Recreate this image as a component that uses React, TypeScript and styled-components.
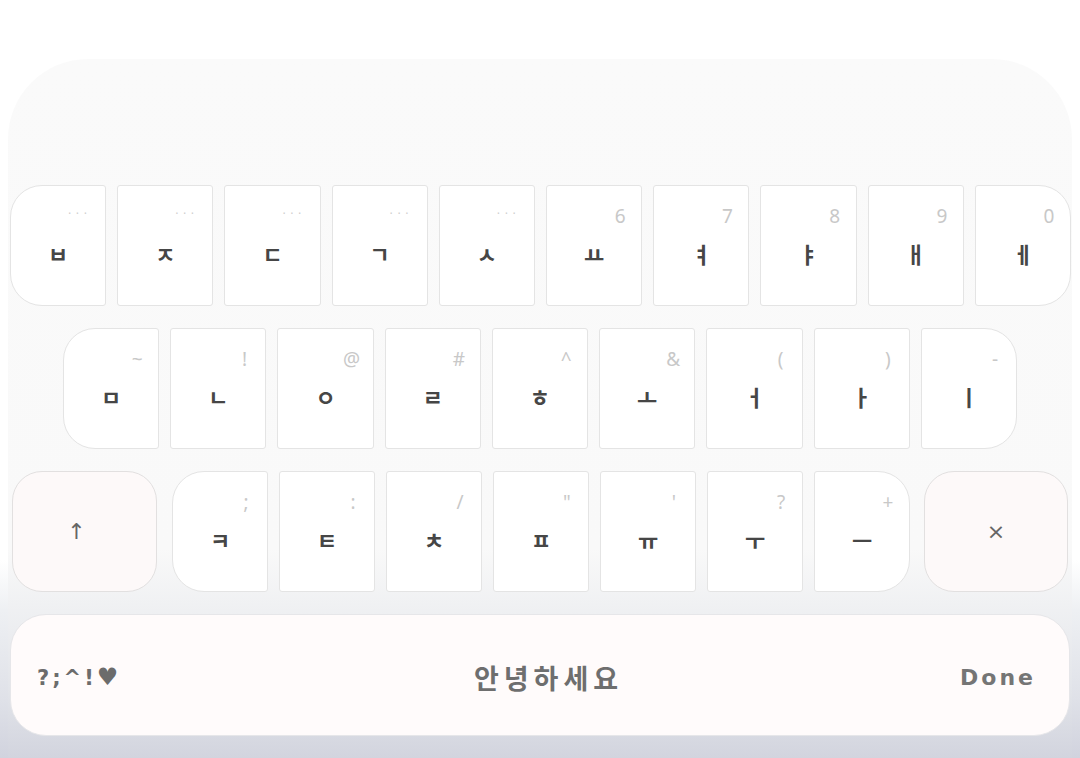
import React from "react";
import styled, { createGlobalStyle } from "styled-components";

const Global = createGlobalStyle`
  html, body { margin: 0; padding: 0; }
  body {
    width: 1080px;
    height: 758px;
    overflow: hidden;
    background: linear-gradient(to bottom, #ffffff 0, #ffffff 560px, #eef0f3 610px, #dfe1e8 700px, #d1d3de 758px);
    font-family: "Noto Sans", "Noto Sans CJK KR", sans-serif;
  }
`;

const Panel = styled.div`
  margin: 59px 8px 0;
  height: 699px;
  box-sizing: border-box;
  padding-top: 126px;
  border-radius: 80px 80px 0 0;
  background: linear-gradient(to bottom, #fafafa 0, #f9f9f9 490px, #f0f1f3 545px, #e3e5ea 630px, #d2d4de 699px);
  display: flex;
  flex-direction: column;
  gap: 22px;
`;

const Row = styled.div<{ $left: number; $right: number }>`
  display: flex;
  gap: 11px;
  margin: 0 ${(p) => p.$right}px 0 ${(p) => p.$left}px;
`;

const KeyGroup = styled.div`
  display: flex;
  gap: 11px;
  flex: 1 1 0;
  margin: 0 3px 0 4px;
`;

type Shape = "left" | "right" | "both" | "none";

const radius = (s: Shape) => {
  switch (s) {
    case "left":
      return "32px 3px 3px 32px";
    case "right":
      return "3px 32px 32px 3px";
    case "both":
      return "30px";
    default:
      return "3px";
  }
};

const Key = styled.div<{ $shape: Shape; $action?: boolean; $w?: number }>`
  position: relative;
  flex: ${(p) => (p.$w ? `0 0 ${p.$w}px` : "1 1 0")};
  height: 121px;
  box-sizing: border-box;
  background: ${(p) => (p.$action ? "#fdf9f9" : "#ffffff")};
  border: 1px solid ${(p) => (p.$action ? "#e2e0e0" : "#e4e4e4")};
  border-radius: ${(p) => radius(p.$shape)};
  display: flex;
  align-items: center;
  justify-content: center;
`;

const Main = styled.span`
  padding-top: 14px;
  font-family: "Noto Sans CJK KR", "Noto Sans", sans-serif;
  font-size: 22px;
  font-weight: 700;
  color: #464646;
  line-height: 1;
`;

const Symbol = styled.span<{ $size: number; $shift?: number }>`
  margin-right: ${(p) => p.$shift ?? 0}px;
  font-family: "DejaVu Sans", sans-serif;
  font-size: ${(p) => p.$size}px;
  color: #666;
  line-height: 1;
`;

const Hint = styled.span`
  position: absolute;
  top: 21px;
  right: 11px;
  width: 20px;
  text-align: center;
  font-family: "Noto Sans", sans-serif;
  font-size: 19px;
  line-height: 1;
  color: #c8c8c8;
`;

const Dots = styled.span`
  position: absolute;
  top: 22px;
  right: 14px;
  font-family: "DejaVu Sans", sans-serif;
  font-size: 12px;
  letter-spacing: 4px;
  line-height: 1;
  color: #cfcfcf;
`;

const Bar = styled.div`
  margin: 0 2px;
  height: 122px;
  box-sizing: border-box;
  border-radius: 36px;
  background: #fffbfb;
  border: 1px solid #e6e6e9;
  display: grid;
  grid-template-columns: 1fr auto 1fr;
  align-items: center;
  padding: 4px 33px 0 26px;
`;

const Punct = styled.span`
  font-family: "DejaVu Sans", sans-serif;
  font-weight: 700;
  font-size: 21px;
  letter-spacing: 3px;
  color: #6c6c6c;
`;

const Heart = styled.span`
  font-size: 24px;
`;

const Title = styled.span`
  margin-left: 24px;
  font-family: "Noto Sans CJK KR", sans-serif;
  font-weight: 700;
  font-size: 27px;
  letter-spacing: 5px;
  color: #6e6e6e;
`;

const Done = styled.span`
  justify-self: end;
  font-family: "DejaVu Sans", sans-serif;
  font-weight: 700;
  font-size: 22px;
  letter-spacing: 3px;
  color: #757575;
`;

const row1: { m: string; h: string | null }[] = [
  { m: "ㅂ", h: null },
  { m: "ㅈ", h: null },
  { m: "ㄷ", h: null },
  { m: "ㄱ", h: null },
  { m: "ㅅ", h: null },
  { m: "ㅛ", h: "6" },
  { m: "ㅕ", h: "7" },
  { m: "ㅑ", h: "8" },
  { m: "ㅐ", h: "9" },
  { m: "ㅔ", h: "0" },
];

const row2 = [
  { m: "ㅁ", h: "~" },
  { m: "ㄴ", h: "!" },
  { m: "ㅇ", h: "@" },
  { m: "ㄹ", h: "#" },
  { m: "ㅎ", h: "^" },
  { m: "ㅗ", h: "&" },
  { m: "ㅓ", h: "(" },
  { m: "ㅏ", h: ")" },
  { m: "ㅣ", h: "-" },
];

const row3 = [
  { m: "ㅋ", h: ";" },
  { m: "ㅌ", h: ":" },
  { m: "ㅊ", h: "/" },
  { m: "ㅍ", h: '"' },
  { m: "ㅠ", h: "'" },
  { m: "ㅜ", h: "?" },
  { m: "ㅡ", h: "+" },
];

const shapeFor = (i: number, n: number): Shape =>
  i === 0 ? "left" : i === n - 1 ? "right" : "none";

export default function App() {
  return (
    <>
      <Global />
      <Panel>
        <Row $left={2} $right={1}>
          {row1.map((k, i) => (
            <Key key={k.m} $shape={shapeFor(i, row1.length)}>
              {k.h ? <Hint>{k.h}</Hint> : <Dots>···</Dots>}
              <Main>{k.m}</Main>
            </Key>
          ))}
        </Row>
        <Row $left={55} $right={55}>
          {row2.map((k, i) => (
            <Key key={k.m} $shape={shapeFor(i, row2.length)}>
              <Hint>{k.h}</Hint>
              <Main>{k.m}</Main>
            </Key>
          ))}
        </Row>
        <Row $left={4} $right={4}>
          <Key $shape="both" $action $w={145}>
            <Symbol $size={22} $shift={16}>↑</Symbol>
          </Key>
          <KeyGroup>
            {row3.map((k, i) => (
              <Key key={k.m} $shape={shapeFor(i, row3.length)}>
                <Hint>{k.h}</Hint>
                <Main>{k.m}</Main>
              </Key>
            ))}
          </KeyGroup>
          <Key $shape="both" $action $w={144}>
            <Symbol $size={22}>×</Symbol>
          </Key>
        </Row>
        <Bar>
          <Punct>
            ?;^!<Heart>♥</Heart>
          </Punct>
          <Title>안녕하세요</Title>
          <Done>Done</Done>
        </Bar>
      </Panel>
    </>
  );
}
